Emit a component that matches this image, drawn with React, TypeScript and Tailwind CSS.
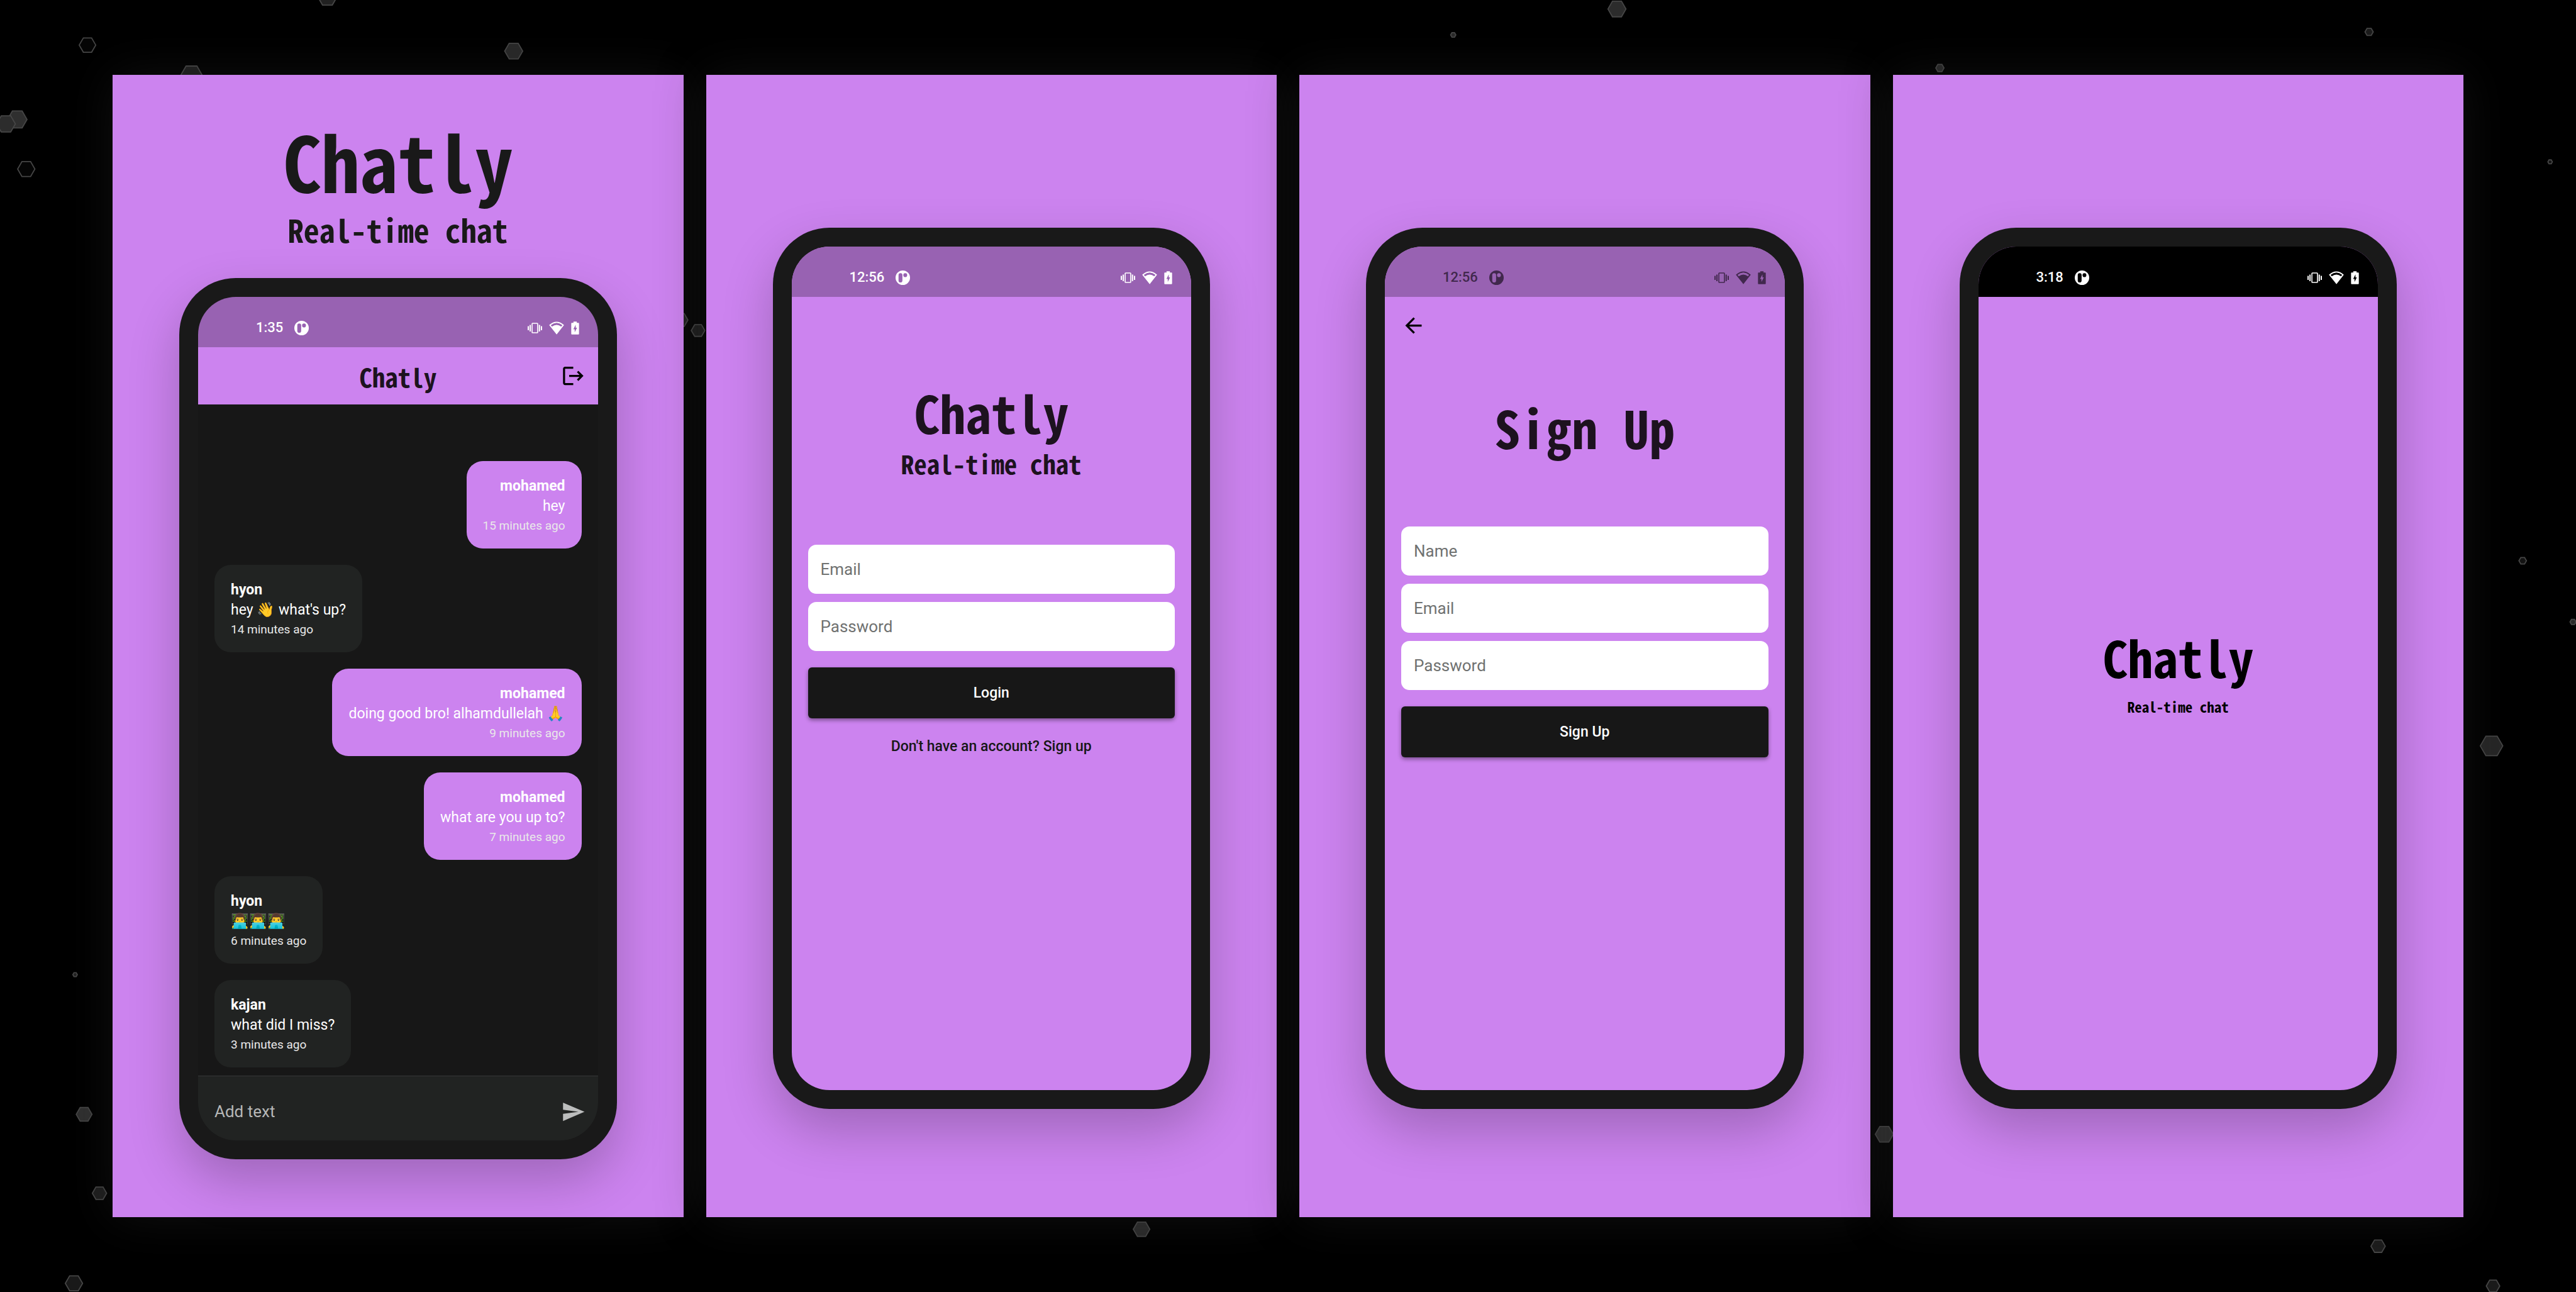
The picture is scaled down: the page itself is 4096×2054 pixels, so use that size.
import { useId, type ReactNode } from "react";
import { MdArrowBack, MdLogout, MdSend } from "react-icons/md";

type Hexagon = { x: number; y: number; r: number; fill: string };

const HEXAGONS: Hexagon[] = [
  { x: 872, y: -9, r: 26, fill: "#212121" },
  { x: 233, y: 120, r: 22, fill: "#060606" },
  { x: 1368, y: 136, r: 24, fill: "#292929" },
  { x: 510, y: 201, r: 29, fill: "#1f1f1f" },
  { x: 46, y: 318, r: 26, fill: "#2f2f2f" },
  { x: 16, y: 330, r: 25, fill: "#2c2c2c" },
  { x: 70, y: 450, r: 23, fill: "#050505" },
  { x: 200, y: 2595, r: 6, fill: "#222222" },
  { x: 224, y: 2967, r: 21, fill: "#303030" },
  { x: 265, y: 3177, r: 19, fill: "#1e1e1e" },
  { x: 197, y: 3417, r: 23, fill: "#191919" },
  { x: 6718, y: 1493, r: 10, fill: "#131313" },
  { x: 6852, y: 1656, r: 8, fill: "#2a2a2a" },
  { x: 6635, y: 1986, r: 30, fill: "#262626" },
  { x: 4306, y: 24, r: 24, fill: "#2c2c2c" },
  { x: 3870, y: 93, r: 7, fill: "#2a2a2a" },
  { x: 6309, y: 85, r: 11, fill: "#1c1c1c" },
  { x: 5166, y: 181, r: 11, fill: "#2a2a2a" },
  { x: 6791, y: 431, r: 6, fill: "#141414" },
  { x: 1812, y: 852, r: 20, fill: "#222222" },
  { x: 1859, y: 880, r: 18, fill: "#1c1c1c" },
  { x: 3040, y: 3273, r: 22, fill: "#2c2c2c" },
  { x: 5018, y: 3020, r: 24, fill: "#2f2f2f" },
  { x: 6333, y: 3318, r: 19, fill: "#1c1c1c" },
  { x: 6639, y: 3424, r: 18, fill: "#1a1a1a" },
];

function hexPoints({ x, y, r }: Hexagon) {
  const h = r * 0.866;
  return [
    [x - r, y],
    [x - r / 2, y - h],
    [x + r / 2, y - h],
    [x + r, y],
    [x + r / 2, y + h],
    [x - r / 2, y + h],
  ]
    .map((p) => p.join(","))
    .join(" ");
}

function Backdrop() {
  return (
    <svg
      aria-hidden="true"
      className="pointer-events-none absolute inset-0 h-full w-full"
      viewBox="0 0 6860 3440"
      preserveAspectRatio="xMidYMid slice"
    >
      {HEXAGONS.map((hex) => (
        <polygon
          key={`${hex.x}-${hex.y}`}
          points={hexPoints(hex)}
          fill={hex.fill}
          stroke="#464646"
          strokeWidth={3}
        />
      ))}
    </svg>
  );
}

function NotificationIcon() {
  return (
    <svg aria-hidden="true" className="size-[23px]" viewBox="0 0 112 112" fill="currentColor">
      <path
        fillRule="evenodd"
        d="M56 0a56 56 0 1 1 0 112a56 56 0 1 1 0-112Z M38 21a15 15 0 0 0-15 15v42a15 15 0 0 0 30 0v-42a15 15 0 0 0-15-15Z M75 21a15 15 0 1 0 0 30a15 15 0 1 0 0-30Z"
      />
    </svg>
  );
}

function VibrateIcon() {
  return (
    <svg aria-hidden="true" className="h-[17px] w-[23px]" viewBox="0 0 114 84" fill="currentColor">
      <rect x="35" y="5" width="44" height="74" rx="4" fill="none" stroke="currentColor" strokeWidth="8" />
      <rect x="15" y="17" width="10" height="52" rx="1" />
      <rect x="0" y="27" width="10" height="32" rx="1" />
      <rect x="88" y="17" width="10" height="52" rx="1" />
      <rect x="104" y="27" width="10" height="32" rx="1" />
    </svg>
  );
}

function WifiIcon() {
  return (
    <svg aria-hidden="true" className="h-[21px] w-6" viewBox="248 74 123 106" fill="currentColor">
      <path
        fillRule="evenodd"
        d="M249 103Q310 49 370 103L310 179Z M262 104Q310 66 357 104L347 115Q310 87 272 115Z"
      />
    </svg>
  );
}

function BatteryIcon() {
  return (
    <svg aria-hidden="true" className="h-[21px] w-[13px]" viewBox="419 75 65 107" fill="currentColor">
      <path
        fillRule="evenodd"
        d="M438 76h27v11h13q5 0 5 5v84q0 5-5 5h-53q-5 0-5-5v-84q0-5 5-5h13Z M456 102L437 139H448V163L467 126H456Z"
      />
    </svg>
  );
}

const STATUS_TONES = {
  light: "bg-[#9862b2] text-white",
  dim: "bg-[#9862b2] text-[#41284d]",
  black: "bg-black text-white",
};

function StatusBar({ time, tone }: { time: string; tone: keyof typeof STATUS_TONES }) {
  return (
    <div className={`flex h-20 shrink-0 items-center pt-[18px] pr-[30px] pl-[92px] ${STATUS_TONES[tone]}`}>
      <time className="mr-[18px] text-[22px] leading-7 font-medium">{time}</time>
      <NotificationIcon />
      <div className="ml-auto flex items-center gap-[11px]">
        <VibrateIcon />
        <WifiIcon />
        <BatteryIcon />
      </div>
    </div>
  );
}

function Phone({
  time,
  tone,
  screen,
  children,
}: {
  time: string;
  tone: keyof typeof STATUS_TONES;
  screen: string;
  children: ReactNode;
}) {
  return (
    <div className="mx-[106px] rounded-[90px] bg-[#191919] p-[30px] shadow-[0_34px_80px_rgba(0,0,0,0.22)]">
      <div className={`flex min-h-[1341px] flex-col overflow-hidden rounded-[60px] ${screen}`}>
        <StatusBar time={time} tone={tone} />
        {children}
      </div>
    </div>
  );
}

function Panel({ children, pad }: { children: ReactNode; pad: string }) {
  return (
    <section
      className={`relative min-w-0 flex-1 bg-[#cc83ef] shadow-[0_0_72px_rgba(40,40,40,0.4)] ${pad}`}
    >
      {children}
    </section>
  );
}

const PIXEL = "text-center font-['Noto_Sans_Mono_CJK_SC','Liberation_Mono',monospace] font-bold";

type Message = { author: string; text: string; ago: string; mine?: boolean };

const MESSAGES: Message[] = [
  { author: "mohamed", text: "hey", ago: "15 minutes ago", mine: true },
  { author: "hyon", text: "hey 👋 what's up?", ago: "14 minutes ago" },
  { author: "mohamed", text: "doing good bro! alhamdullelah 🙏", ago: "9 minutes ago", mine: true },
  { author: "mohamed", text: "what are you up to?", ago: "7 minutes ago", mine: true },
  { author: "hyon", text: "👨‍💻👨‍💻👨‍💻", ago: "6 minutes ago" },
  { author: "kajan", text: "what did I miss?", ago: "3 minutes ago" },
];

function Bubble({ message }: { message: Message }) {
  const side = message.mine
    ? "self-end bg-[#cc83ef] text-right"
    : "self-start bg-[#212322] text-left";
  return (
    <li className={`rounded-[26px] px-[26px] pt-6 pb-[22px] text-white ${side}`}>
      <p className="text-[23px] leading-8 font-bold">{message.author}</p>
      <p className="h-8 text-[23px] leading-8">{message.text}</p>
      <p className="text-[19px] leading-[29px] text-[#e9e9e9]">{message.ago}</p>
    </li>
  );
}

function ChatScreen() {
  return (
    <>
      <header className="grid h-[91px] shrink-0 grid-cols-[1fr_auto_1fr] items-center bg-[#cc83ef] px-5">
        <h2 className={`col-start-2 text-[41px] leading-[56px] text-[#1d121f] ${PIXEL}`}>Chatly</h2>
        <button type="button" aria-label="Log out" className="justify-self-end text-black">
          <MdLogout className="size-[39px]" />
        </button>
      </header>
      <ul className="flex flex-1 flex-col gap-[26px] px-[26px] pt-[90px] pb-[13px]">
        {MESSAGES.map((message) => (
          <Bubble key={message.ago} message={message} />
        ))}
      </ul>
      <form className="flex h-[103px] shrink-0 items-center border-t border-[#363737] bg-[#212322] pt-[10px] pr-5">
        <div className="relative min-w-0 flex-1">
          <input
            id="chat-text"
            type="text"
            placeholder=" "
            className="peer block w-full bg-transparent py-2 pl-[26px] text-[26px] leading-8 text-white outline-none"
          />
          <label
            htmlFor="chat-text"
            className="pointer-events-none absolute inset-y-0 left-[26px] flex items-center text-[26px] leading-8 text-[#b6b7b7] peer-[:not(:placeholder-shown)]:hidden"
          >
            Add text
          </label>
        </div>
        <button type="button" aria-label="Send" className="text-[#bcbdbd]">
          <MdSend className="size-[39px]" />
        </button>
      </form>
    </>
  );
}

function Field({ label, type = "text" }: { label: string; type?: string }) {
  const id = useId();
  return (
    <div className="relative">
      <input
        id={id}
        type={type}
        placeholder=" "
        className="peer block h-[78px] w-full rounded-[13px] bg-white px-5 text-[26px] leading-8 text-[#171717] outline-none"
      />
      <label
        htmlFor={id}
        className="pointer-events-none absolute inset-y-0 left-5 flex items-center text-[26px] leading-8 text-[#707271] peer-[:not(:placeholder-shown)]:hidden"
      >
        {label}
      </label>
    </div>
  );
}

function SubmitButton({ children }: { children: ReactNode }) {
  return (
    <button
      type="button"
      className="mt-[13px] h-[81px] rounded-md bg-[#171717] text-[23px] leading-8 font-medium text-white shadow-[0_3px_6px_rgba(0,0,0,0.4)]"
    >
      {children}
    </button>
  );
}

function LoginScreen() {
  return (
    <div className="flex flex-col px-[26px] pt-[143px]">
      <h2 className={`text-[82px] leading-[80px] text-[#1d121f] ${PIXEL}`}>Chatly</h2>
      <p className={`mt-[17px] text-[41px] leading-[48px] text-[#1d121f] ${PIXEL}`}>Real-time chat</p>
      <form className="mt-[106px] flex flex-col gap-[13px]">
        <Field label="Email" type="email" />
        <Field label="Password" type="password" />
        <SubmitButton>Login</SubmitButton>
      </form>
      <a href="#signup" className="mt-[29px] self-center text-[23px] leading-8 font-medium text-[#171717]">
        Don't have an account? Sign up
      </a>
    </div>
  );
}

function SignUpScreen() {
  return (
    <div id="signup" className="flex flex-col p-[26px]">
      <button type="button" aria-label="Back" className="self-start text-black">
        <MdArrowBack className="size-[39px]" />
      </button>
      <h2 className={`mt-[102px] text-[82px] leading-[80px] text-[#1d121f] ${PIXEL}`}>Sign Up</h2>
      <form className="mt-[118px] flex flex-col gap-[13px]">
        <Field label="Name" />
        <Field label="Email" type="email" />
        <Field label="Password" type="password" />
        <SubmitButton>Sign Up</SubmitButton>
      </form>
    </div>
  );
}

function SplashScreen() {
  return (
    <div className="flex flex-1 flex-col justify-center pb-16 text-black">
      <h2 className={`text-[80px] leading-[80px] ${PIXEL}`}>Chatly</h2>
      <p className={`mt-6 text-[23px] leading-8 ${PIXEL}`}>Real-time chat</p>
    </div>
  );
}

export default function App() {
  return (
    <div className="relative min-h-screen overflow-hidden bg-black font-[Roboto,sans-serif]">
      <Backdrop />
      <main className="relative flex gap-9 px-[179px] py-[119px]">
        <Panel pad="pt-[74px] pb-[92px]">
          <h1 className={`text-[122px] leading-[122px] text-[#191919] ${PIXEL}`}>Chatly</h1>
          <p className={`mt-[21px] mb-[50px] text-[50px] leading-[56px] text-[#191919] ${PIXEL}`}>
            Real-time chat
          </p>
          <Phone time="1:35" tone="light" screen="bg-[#171717]">
            <ChatScreen />
          </Phone>
        </Panel>
        <Panel pad="pt-[243px]">
          <Phone time="12:56" tone="light" screen="bg-[#cc83ef]">
            <LoginScreen />
          </Phone>
        </Panel>
        <Panel pad="pt-[243px]">
          <Phone time="12:56" tone="dim" screen="bg-[#cc83ef]">
            <SignUpScreen />
          </Phone>
        </Panel>
        <Panel pad="pt-[243px]">
          <Phone time="3:18" tone="black" screen="bg-[#cc83ef]">
            <SplashScreen />
          </Phone>
        </Panel>
      </main>
    </div>
  );
}
